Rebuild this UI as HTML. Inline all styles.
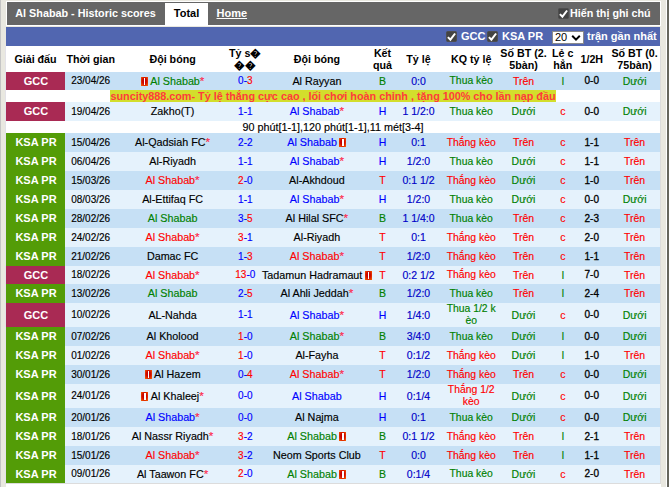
<!DOCTYPE html>
<html><head><meta charset="utf-8"><style>
*{margin:0;padding:0;box-sizing:border-box}
html,body{width:669px;height:487px;overflow:hidden}
body{background:#e9e8e0;position:relative;font-family:"Liberation Sans",sans-serif;font-size:10.5px;color:#000}
.lline{position:absolute;left:0;top:0;width:1px;height:487px;background:#c4c4c4}
.rline{position:absolute;left:666px;top:0;width:1px;height:487px;background:#fff}
.rdark{position:absolute;left:667px;top:0;width:2px;height:487px;background:#66665e}
.top{position:absolute;left:6px;top:1px;width:655px;height:25px;background:#666;border:1px solid #fff}
.title{position:absolute;left:8.3px;top:4px;color:#fff;font-weight:bold;font-size:10.8px;line-height:14px}
.tab{position:absolute;left:158px;top:1px;width:43px;height:23px;background:#fff;color:#000;font-weight:bold;font-size:11px;line-height:20px;text-align:center}
.home{position:absolute;left:209.5px;top:4px;color:#fff;font-weight:bold;font-size:11px;line-height:14px;text-decoration:underline}
.cb1{position:absolute;left:551px;top:6px}
.note1{position:absolute;left:563px;top:4px;color:#fff;font-weight:bold;font-size:10.75px;line-height:14px}
.blue{position:absolute;left:6px;top:27px;width:654px;height:19px;background:#5166b0}
.bl{position:absolute;top:2px;color:#fff;font-weight:bold;font-size:11px;line-height:14px}
.sel{position:absolute;left:546px;top:4px;width:32px;height:13px;background:#fff;border:1px solid #8a8a8a;font-size:11px;line-height:11px;padding-left:2px}
.hdr{position:absolute;left:6px;top:46px;width:654px;height:26px;background:#fff}
.h{position:absolute;top:0;width:100px;height:26px;line-height:26px;text-align:center;font-weight:bold;font-size:10.7px;margin-left:-6px}
.h.two{line-height:12px;padding-top:1px}
.row{position:absolute;left:6px;width:654px}
.row.d{background:#c6e0f5}
.row.l{background:#e5f2fc}
.c{-webkit-text-stroke:0.15px currentColor;position:absolute;top:0.4px;width:160px;text-align:center;white-space:nowrap;margin-left:-6px}
.c.two{line-height:12px;padding-top:0px}
.lg{left:0;top:0;width:59px;margin-left:0;padding-left:1px;-webkit-text-stroke:0;color:#fff;font-weight:bold;font-size:11px}
.gcc{background:#a92a54}
.ksa{background:#539c07}
.ic{display:inline-block;width:7px;height:9px;background:radial-gradient(ellipse at 50% 45%,#c80000 35%,#ff6a00 100%);position:relative;margin:0 2.5px 0 0;vertical-align:-0.5px}
.ic::after{content:"";position:absolute;left:3px;top:1px;width:1.2px;height:7px;background:#fff}
.c span+.ic{margin:0 0 0 2.5px}
.st{color:#ff2448;font-weight:normal;font-size:1.1em;line-height:0}
.ht{font-weight:normal;-webkit-text-stroke:0.3px currentColor}
.tl{color:#0000c8}
.ad{position:absolute;left:6px;width:654px;height:12px;background:#fff;text-align:center;line-height:12px}
.ad span{background:#d3de2c;color:#ff3b3b;font-weight:bold;font-size:10.8px;display:inline-block;height:12px}
.note{position:absolute;left:6px;width:654px;height:12px;background:#fff;text-align:center;line-height:12px;font-size:10.8px;-webkit-text-stroke:0.15px #000}
.bline{position:absolute;left:5px;top:483px;width:655px;height:1px;background:#dcdcdc}
.lvline{position:absolute;left:5px;top:46px;width:1px;height:438px;background:#e3e2e8}
.vline{position:absolute;left:660px;top:46px;width:1px;height:438px;background:#dcdcdc}
.below{position:absolute;left:6px;top:484px;width:655px;height:3px;background:#fff}
</style></head><body>
<div class="lline"></div><div class="rline"></div><div class="rdark"></div>
<div class="top">
 <div class="title">Al Shabab - Historic scores</div>
 <div class="tab">Total</div>
 <div class="home">Home</div>
 <div class="cb1"><svg width="11" height="11" viewBox="0 0 11 11" style="display:block"><rect x="0.5" y="0.5" width="10" height="10" rx="1" fill="#434343" stroke="#4e4e4e" stroke-width="1"/><path d="M1.9 6.1 L4.4 8.7 L9.1 2.5" fill="none" stroke="#fff" stroke-width="2"/></svg></div>
 <div class="note1">Hiển thị ghi chú</div>
</div>
<div class="blue">
 <div class="bl" style="left:440px;top:4px"><svg width="11" height="11" viewBox="0 0 11 11" style="display:block"><rect x="0.5" y="0.5" width="10" height="10" rx="1" fill="#434343" stroke="#4e4e4e" stroke-width="1"/><path d="M1.9 6.1 L4.4 8.7 L9.1 2.5" fill="none" stroke="#fff" stroke-width="2"/></svg></div>
 <div class="bl" style="left:455px">GCC</div>
 <div class="bl" style="left:481px;top:4px"><svg width="11" height="11" viewBox="0 0 11 11" style="display:block"><rect x="0.5" y="0.5" width="10" height="10" rx="1" fill="#434343" stroke="#4e4e4e" stroke-width="1"/><path d="M1.9 6.1 L4.4 8.7 L9.1 2.5" fill="none" stroke="#fff" stroke-width="2"/></svg></div>
 <div class="bl" style="left:496px">KSA PR</div>
 <div class="sel">20<svg style="position:absolute;left:18px;top:2px" width="10" height="8" viewBox="0 0 10 8"><path d="M1.2 1.8 L5 5.6 L8.8 1.8" fill="none" stroke="#000" stroke-width="2"/></svg></div>
 <div class="bl" style="left:581px">trận gần nhất</div>
</div>
<div class="hdr"><div class="h" style="left:-14.5px">Giải đấu</div><div class="h" style="left:40.7px">Thời gian</div><div class="h" style="left:122.6px">Đội bóng</div><div class="h two" style="left:195.3px">Tỷ s�<br>��</div><div class="h" style="left:266.9px">Đội bóng</div><div class="h two" style="left:332.5px">Kết<br>quả</div><div class="h" style="left:368.5px">Tỷ lệ</div><div class="h" style="left:421.2px">KQ tỷ lệ</div><div class="h two" style="left:473.5px">Số BT (2.<br>5bàn)</div><div class="h two" style="left:512.8px">Lẻ c<br>hẳn</div><div class="h" style="left:541.8px">1/2H</div><div class="h two" style="left:584.6px">Số BT (0.<br>75bàn)</div></div>
<div class="row d" style="top:72px;height:18px"><div class="c lg gcc" style="height:18px;line-height:18px">GCC</div><div class="c" style="left:10.700000000000003px;height:18px;line-height:18px;font-size:10px">23/04/26</div><div class="c" style="left:92.6px;height:18px;line-height:18px;font-size:10.75px"><i class="ic"></i><span style="color:#008000">Al Shabab</span><b class="st">*</b></div><div class="c" style="left:165.3px;height:18px;line-height:18px;font-size:10px"><span style="color:#0000ff">0</span><span style="color:#0000ff">-</span><span style="color:#ff0000">3</span></div><div class="c" style="left:236.89999999999998px;height:18px;line-height:18px;font-size:10.75px"><span style="color:#000">Al Rayyan</span></div><div class="c" style="left:302.5px;height:18px;line-height:18px;font-size:10.5px"><span style="color:#008000">B</span></div><div class="c" style="left:338.5px;height:18px;line-height:18px;font-size:10.5px"><span class="tl">0:0</span></div><div class="c" style="left:391.2px;height:18px;line-height:18px;font-size:10.4px"><span style="color:#008000">Thua kèo</span></div><div class="c" style="left:443.5px;height:18px;line-height:18px;font-size:10.5px"><span style="color:#ff0000">Trên</span></div><div class="c" style="left:482.79999999999995px;height:18px;line-height:18px;font-size:10.5px"><span style="color:#008000">l</span></div><div class="c" style="left:511.79999999999995px;height:18px;line-height:18px;font-size:10px"><b class="ht">0-0</b></div><div class="c" style="left:554.6px;height:18px;line-height:18px;font-size:10.5px"><span style="color:#008000">Dưới</span></div></div><div class="ad" style="top:90px"><span>suncity888.com- Tỷ lệ thắng cực cao , lối chơi hoàn chỉnh , tặng 100% cho lần nạp đầu</span></div><div class="row l" style="top:102px;height:19px"><div class="c lg gcc" style="height:19px;line-height:19px">GCC</div><div class="c" style="left:10.700000000000003px;height:19px;line-height:19px;font-size:10px">19/04/26</div><div class="c" style="left:92.6px;height:19px;line-height:19px;font-size:10.75px"><span style="color:#000">Zakho(T)</span></div><div class="c" style="left:165.3px;height:19px;line-height:19px;font-size:10px"><span style="color:#0000ff">1</span><span style="color:#0000ff">-</span><span style="color:#0000ff">1</span></div><div class="c" style="left:236.89999999999998px;height:19px;line-height:19px;font-size:10.75px"><span style="color:#0000ff">Al Shabab</span><b class="st">*</b></div><div class="c" style="left:302.5px;height:19px;line-height:19px;font-size:10.5px"><span style="color:#0000ff">H</span></div><div class="c" style="left:338.5px;height:19px;line-height:19px;font-size:10.5px"><span class="tl">1 1/2:0</span></div><div class="c" style="left:391.2px;height:19px;line-height:19px;font-size:10.4px"><span style="color:#008000">Thua kèo</span></div><div class="c" style="left:443.5px;height:19px;line-height:19px;font-size:10.5px"><span style="color:#008000">Dưới</span></div><div class="c" style="left:482.79999999999995px;height:19px;line-height:19px;font-size:10.5px"><span style="color:#ff0000">c</span></div><div class="c" style="left:511.79999999999995px;height:19px;line-height:19px;font-size:10px"><b class="ht">0-0</b></div><div class="c" style="left:554.6px;height:19px;line-height:19px;font-size:10.5px"><span style="color:#008000">Dưới</span></div></div><div class="note" style="top:121px">90 phút[1-1],120 phút[1-1],11 mét[3-4]</div><div class="row d" style="top:133px;height:19px"><div class="c lg ksa" style="height:19px;line-height:19px">KSA PR</div><div class="c" style="left:10.700000000000003px;height:19px;line-height:19px;font-size:10px">15/04/26</div><div class="c" style="left:92.6px;height:19px;line-height:19px;font-size:10.75px"><span style="color:#000">Al-Qadsiah FC</span><b class="st">*</b></div><div class="c" style="left:165.3px;height:19px;line-height:19px;font-size:10px"><span style="color:#0000ff">2</span><span style="color:#0000ff">-</span><span style="color:#0000ff">2</span></div><div class="c" style="left:236.89999999999998px;height:19px;line-height:19px;font-size:10.75px"><span style="color:#0000ff">Al Shabab</span><i class="ic"></i></div><div class="c" style="left:302.5px;height:19px;line-height:19px;font-size:10.5px"><span style="color:#0000ff">H</span></div><div class="c" style="left:338.5px;height:19px;line-height:19px;font-size:10.5px"><span class="tl">0:1</span></div><div class="c" style="left:391.2px;height:19px;line-height:19px;font-size:10.4px"><span style="color:#ff0000">Thắng kèo</span></div><div class="c" style="left:443.5px;height:19px;line-height:19px;font-size:10.5px"><span style="color:#ff0000">Trên</span></div><div class="c" style="left:482.79999999999995px;height:19px;line-height:19px;font-size:10.5px"><span style="color:#ff0000">c</span></div><div class="c" style="left:511.79999999999995px;height:19px;line-height:19px;font-size:10px"><b class="ht">1-1</b></div><div class="c" style="left:554.6px;height:19px;line-height:19px;font-size:10.5px"><span style="color:#ff0000">Trên</span></div></div><div class="row l" style="top:152px;height:19px"><div class="c lg ksa" style="height:19px;line-height:19px">KSA PR</div><div class="c" style="left:10.700000000000003px;height:19px;line-height:19px;font-size:10px">06/04/26</div><div class="c" style="left:92.6px;height:19px;line-height:19px;font-size:10.75px"><span style="color:#000">Al-Riyadh</span></div><div class="c" style="left:165.3px;height:19px;line-height:19px;font-size:10px"><span style="color:#0000ff">1</span><span style="color:#0000ff">-</span><span style="color:#0000ff">1</span></div><div class="c" style="left:236.89999999999998px;height:19px;line-height:19px;font-size:10.75px"><span style="color:#0000ff">Al Shabab</span><b class="st">*</b></div><div class="c" style="left:302.5px;height:19px;line-height:19px;font-size:10.5px"><span style="color:#0000ff">H</span></div><div class="c" style="left:338.5px;height:19px;line-height:19px;font-size:10.5px"><span class="tl">1/2:0</span></div><div class="c" style="left:391.2px;height:19px;line-height:19px;font-size:10.4px"><span style="color:#008000">Thua kèo</span></div><div class="c" style="left:443.5px;height:19px;line-height:19px;font-size:10.5px"><span style="color:#008000">Dưới</span></div><div class="c" style="left:482.79999999999995px;height:19px;line-height:19px;font-size:10.5px"><span style="color:#ff0000">c</span></div><div class="c" style="left:511.79999999999995px;height:19px;line-height:19px;font-size:10px"><b class="ht">1-1</b></div><div class="c" style="left:554.6px;height:19px;line-height:19px;font-size:10.5px"><span style="color:#ff0000">Trên</span></div></div><div class="row d" style="top:171px;height:19px"><div class="c lg ksa" style="height:19px;line-height:19px">KSA PR</div><div class="c" style="left:10.700000000000003px;height:19px;line-height:19px;font-size:10px">15/03/26</div><div class="c" style="left:92.6px;height:19px;line-height:19px;font-size:10.75px"><span style="color:#ff0000">Al Shabab</span><b class="st">*</b></div><div class="c" style="left:165.3px;height:19px;line-height:19px;font-size:10px"><span style="color:#ff0000">2</span><span style="color:#0000ff">-</span><span style="color:#0000ff">0</span></div><div class="c" style="left:236.89999999999998px;height:19px;line-height:19px;font-size:10.75px"><span style="color:#000">Al-Akhdoud</span></div><div class="c" style="left:302.5px;height:19px;line-height:19px;font-size:10.5px"><span style="color:#ff0000">T</span></div><div class="c" style="left:338.5px;height:19px;line-height:19px;font-size:10.5px"><span class="tl">0:1 1/2</span></div><div class="c" style="left:391.2px;height:19px;line-height:19px;font-size:10.4px"><span style="color:#ff0000">Thắng kèo</span></div><div class="c" style="left:443.5px;height:19px;line-height:19px;font-size:10.5px"><span style="color:#008000">Dưới</span></div><div class="c" style="left:482.79999999999995px;height:19px;line-height:19px;font-size:10.5px"><span style="color:#ff0000">c</span></div><div class="c" style="left:511.79999999999995px;height:19px;line-height:19px;font-size:10px"><b class="ht">1-0</b></div><div class="c" style="left:554.6px;height:19px;line-height:19px;font-size:10.5px"><span style="color:#ff0000">Trên</span></div></div><div class="row l" style="top:190px;height:19px"><div class="c lg ksa" style="height:19px;line-height:19px">KSA PR</div><div class="c" style="left:10.700000000000003px;height:19px;line-height:19px;font-size:10px">08/03/26</div><div class="c" style="left:92.6px;height:19px;line-height:19px;font-size:10.75px"><span style="color:#000">Al-Ettifaq FC</span></div><div class="c" style="left:165.3px;height:19px;line-height:19px;font-size:10px"><span style="color:#0000ff">1</span><span style="color:#0000ff">-</span><span style="color:#0000ff">1</span></div><div class="c" style="left:236.89999999999998px;height:19px;line-height:19px;font-size:10.75px"><span style="color:#0000ff">Al Shabab</span><b class="st">*</b></div><div class="c" style="left:302.5px;height:19px;line-height:19px;font-size:10.5px"><span style="color:#0000ff">H</span></div><div class="c" style="left:338.5px;height:19px;line-height:19px;font-size:10.5px"><span class="tl">1/2:0</span></div><div class="c" style="left:391.2px;height:19px;line-height:19px;font-size:10.4px"><span style="color:#008000">Thua kèo</span></div><div class="c" style="left:443.5px;height:19px;line-height:19px;font-size:10.5px"><span style="color:#008000">Dưới</span></div><div class="c" style="left:482.79999999999995px;height:19px;line-height:19px;font-size:10.5px"><span style="color:#ff0000">c</span></div><div class="c" style="left:511.79999999999995px;height:19px;line-height:19px;font-size:10px"><b class="ht">0-0</b></div><div class="c" style="left:554.6px;height:19px;line-height:19px;font-size:10.5px"><span style="color:#008000">Dưới</span></div></div><div class="row d" style="top:209px;height:19px"><div class="c lg ksa" style="height:19px;line-height:19px">KSA PR</div><div class="c" style="left:10.700000000000003px;height:19px;line-height:19px;font-size:10px">28/02/26</div><div class="c" style="left:92.6px;height:19px;line-height:19px;font-size:10.75px"><span style="color:#008000">Al Shabab</span></div><div class="c" style="left:165.3px;height:19px;line-height:19px;font-size:10px"><span style="color:#0000ff">3</span><span style="color:#0000ff">-</span><span style="color:#ff0000">5</span></div><div class="c" style="left:236.89999999999998px;height:19px;line-height:19px;font-size:10.75px"><span style="color:#000">Al Hilal SFC</span><b class="st">*</b></div><div class="c" style="left:302.5px;height:19px;line-height:19px;font-size:10.5px"><span style="color:#008000">B</span></div><div class="c" style="left:338.5px;height:19px;line-height:19px;font-size:10.5px"><span class="tl">1 1/4:0</span></div><div class="c" style="left:391.2px;height:19px;line-height:19px;font-size:10.4px"><span style="color:#008000">Thua kèo</span></div><div class="c" style="left:443.5px;height:19px;line-height:19px;font-size:10.5px"><span style="color:#ff0000">Trên</span></div><div class="c" style="left:482.79999999999995px;height:19px;line-height:19px;font-size:10.5px"><span style="color:#ff0000">c</span></div><div class="c" style="left:511.79999999999995px;height:19px;line-height:19px;font-size:10px"><b class="ht">2-3</b></div><div class="c" style="left:554.6px;height:19px;line-height:19px;font-size:10.5px"><span style="color:#ff0000">Trên</span></div></div><div class="row l" style="top:228px;height:19px"><div class="c lg ksa" style="height:19px;line-height:19px">KSA PR</div><div class="c" style="left:10.700000000000003px;height:19px;line-height:19px;font-size:10px">24/02/26</div><div class="c" style="left:92.6px;height:19px;line-height:19px;font-size:10.75px"><span style="color:#ff0000">Al Shabab</span><b class="st">*</b></div><div class="c" style="left:165.3px;height:19px;line-height:19px;font-size:10px"><span style="color:#ff0000">3</span><span style="color:#0000ff">-</span><span style="color:#0000ff">1</span></div><div class="c" style="left:236.89999999999998px;height:19px;line-height:19px;font-size:10.75px"><span style="color:#000">Al-Riyadh</span></div><div class="c" style="left:302.5px;height:19px;line-height:19px;font-size:10.5px"><span style="color:#ff0000">T</span></div><div class="c" style="left:338.5px;height:19px;line-height:19px;font-size:10.5px"><span class="tl">0:1</span></div><div class="c" style="left:391.2px;height:19px;line-height:19px;font-size:10.4px"><span style="color:#ff0000">Thắng kèo</span></div><div class="c" style="left:443.5px;height:19px;line-height:19px;font-size:10.5px"><span style="color:#ff0000">Trên</span></div><div class="c" style="left:482.79999999999995px;height:19px;line-height:19px;font-size:10.5px"><span style="color:#ff0000">c</span></div><div class="c" style="left:511.79999999999995px;height:19px;line-height:19px;font-size:10px"><b class="ht">2-0</b></div><div class="c" style="left:554.6px;height:19px;line-height:19px;font-size:10.5px"><span style="color:#ff0000">Trên</span></div></div><div class="row d" style="top:247px;height:19px"><div class="c lg ksa" style="height:19px;line-height:19px">KSA PR</div><div class="c" style="left:10.700000000000003px;height:19px;line-height:19px;font-size:10px">21/02/26</div><div class="c" style="left:92.6px;height:19px;line-height:19px;font-size:10.75px"><span style="color:#000">Damac FC</span></div><div class="c" style="left:165.3px;height:19px;line-height:19px;font-size:10px"><span style="color:#0000ff">1</span><span style="color:#0000ff">-</span><span style="color:#ff0000">3</span></div><div class="c" style="left:236.89999999999998px;height:19px;line-height:19px;font-size:10.75px"><span style="color:#ff0000">Al Shabab</span><b class="st">*</b></div><div class="c" style="left:302.5px;height:19px;line-height:19px;font-size:10.5px"><span style="color:#ff0000">T</span></div><div class="c" style="left:338.5px;height:19px;line-height:19px;font-size:10.5px"><span class="tl">1/2:0</span></div><div class="c" style="left:391.2px;height:19px;line-height:19px;font-size:10.4px"><span style="color:#ff0000">Thắng kèo</span></div><div class="c" style="left:443.5px;height:19px;line-height:19px;font-size:10.5px"><span style="color:#ff0000">Trên</span></div><div class="c" style="left:482.79999999999995px;height:19px;line-height:19px;font-size:10.5px"><span style="color:#ff0000">c</span></div><div class="c" style="left:511.79999999999995px;height:19px;line-height:19px;font-size:10px"><b class="ht">1-1</b></div><div class="c" style="left:554.6px;height:19px;line-height:19px;font-size:10.5px"><span style="color:#ff0000">Trên</span></div></div><div class="row l" style="top:266px;height:18px"><div class="c lg gcc" style="height:18px;line-height:18px">GCC</div><div class="c" style="left:10.700000000000003px;height:18px;line-height:18px;font-size:10px">18/02/26</div><div class="c" style="left:92.6px;height:18px;line-height:18px;font-size:10.75px"><span style="color:#ff0000">Al Shabab</span><b class="st">*</b></div><div class="c" style="left:165.3px;height:18px;line-height:18px;font-size:10px"><span style="color:#ff0000">13</span><span style="color:#0000ff">-</span><span style="color:#0000ff">0</span></div><div class="c" style="left:236.89999999999998px;height:18px;line-height:18px;font-size:10.75px"><span style="color:#000">Tadamun Hadramaut</span><i class="ic"></i></div><div class="c" style="left:302.5px;height:18px;line-height:18px;font-size:10.5px"><span style="color:#ff0000">T</span></div><div class="c" style="left:338.5px;height:18px;line-height:18px;font-size:10.5px"><span class="tl">0:2 1/2</span></div><div class="c" style="left:391.2px;height:18px;line-height:18px;font-size:10.4px"><span style="color:#ff0000">Thắng kèo</span></div><div class="c" style="left:443.5px;height:18px;line-height:18px;font-size:10.5px"><span style="color:#ff0000">Trên</span></div><div class="c" style="left:482.79999999999995px;height:18px;line-height:18px;font-size:10.5px"><span style="color:#008000">l</span></div><div class="c" style="left:511.79999999999995px;height:18px;line-height:18px;font-size:10px"><b class="ht">7-0</b></div><div class="c" style="left:554.6px;height:18px;line-height:18px;font-size:10.5px"><span style="color:#ff0000">Trên</span></div></div><div class="row d" style="top:284px;height:19px"><div class="c lg ksa" style="height:19px;line-height:19px">KSA PR</div><div class="c" style="left:10.700000000000003px;height:19px;line-height:19px;font-size:10px">13/02/26</div><div class="c" style="left:92.6px;height:19px;line-height:19px;font-size:10.75px"><span style="color:#008000">Al Shabab</span></div><div class="c" style="left:165.3px;height:19px;line-height:19px;font-size:10px"><span style="color:#0000ff">2</span><span style="color:#0000ff">-</span><span style="color:#ff0000">5</span></div><div class="c" style="left:236.89999999999998px;height:19px;line-height:19px;font-size:10.75px"><span style="color:#000">Al Ahli Jeddah</span><b class="st">*</b></div><div class="c" style="left:302.5px;height:19px;line-height:19px;font-size:10.5px"><span style="color:#008000">B</span></div><div class="c" style="left:338.5px;height:19px;line-height:19px;font-size:10.5px"><span class="tl">1/2:0</span></div><div class="c" style="left:391.2px;height:19px;line-height:19px;font-size:10.4px"><span style="color:#008000">Thua kèo</span></div><div class="c" style="left:443.5px;height:19px;line-height:19px;font-size:10.5px"><span style="color:#ff0000">Trên</span></div><div class="c" style="left:482.79999999999995px;height:19px;line-height:19px;font-size:10.5px"><span style="color:#008000">l</span></div><div class="c" style="left:511.79999999999995px;height:19px;line-height:19px;font-size:10px"><b class="ht">2-4</b></div><div class="c" style="left:554.6px;height:19px;line-height:19px;font-size:10.5px"><span style="color:#ff0000">Trên</span></div></div><div class="row l" style="top:303px;height:24px"><div class="c lg gcc" style="height:24px;line-height:24px">GCC</div><div class="c" style="left:10.700000000000003px;height:24px;line-height:24px;font-size:10px">10/02/26</div><div class="c" style="left:92.6px;height:24px;line-height:24px;font-size:10.75px"><span style="color:#000">AL-Nahda</span></div><div class="c" style="left:165.3px;height:24px;line-height:24px;font-size:10px"><span style="color:#0000ff">1</span><span style="color:#0000ff">-</span><span style="color:#0000ff">1</span></div><div class="c" style="left:236.89999999999998px;height:24px;line-height:24px;font-size:10.75px"><span style="color:#0000ff">Al Shabab</span><b class="st">*</b></div><div class="c" style="left:302.5px;height:24px;line-height:24px;font-size:10.5px"><span style="color:#0000ff">H</span></div><div class="c" style="left:338.5px;height:24px;line-height:24px;font-size:10.5px"><span class="tl">1/4:0</span></div><div class="c two" style="left:391.2px;height:24px;font-size:10.4px"><span style="color:#008000">Thua 1/2 k<br>èo</span></div><div class="c" style="left:443.5px;height:24px;line-height:24px;font-size:10.5px"><span style="color:#008000">Dưới</span></div><div class="c" style="left:482.79999999999995px;height:24px;line-height:24px;font-size:10.5px"><span style="color:#ff0000">c</span></div><div class="c" style="left:511.79999999999995px;height:24px;line-height:24px;font-size:10px"><b class="ht">0-0</b></div><div class="c" style="left:554.6px;height:24px;line-height:24px;font-size:10.5px"><span style="color:#008000">Dưới</span></div></div><div class="row d" style="top:327px;height:19px"><div class="c lg ksa" style="height:19px;line-height:19px">KSA PR</div><div class="c" style="left:10.700000000000003px;height:19px;line-height:19px;font-size:10px">07/02/26</div><div class="c" style="left:92.6px;height:19px;line-height:19px;font-size:10.75px"><span style="color:#000">Al Kholood</span></div><div class="c" style="left:165.3px;height:19px;line-height:19px;font-size:10px"><span style="color:#ff0000">1</span><span style="color:#0000ff">-</span><span style="color:#0000ff">0</span></div><div class="c" style="left:236.89999999999998px;height:19px;line-height:19px;font-size:10.75px"><span style="color:#008000">Al Shabab</span><b class="st">*</b></div><div class="c" style="left:302.5px;height:19px;line-height:19px;font-size:10.5px"><span style="color:#008000">B</span></div><div class="c" style="left:338.5px;height:19px;line-height:19px;font-size:10.5px"><span class="tl">3/4:0</span></div><div class="c" style="left:391.2px;height:19px;line-height:19px;font-size:10.4px"><span style="color:#008000">Thua kèo</span></div><div class="c" style="left:443.5px;height:19px;line-height:19px;font-size:10.5px"><span style="color:#008000">Dưới</span></div><div class="c" style="left:482.79999999999995px;height:19px;line-height:19px;font-size:10.5px"><span style="color:#008000">l</span></div><div class="c" style="left:511.79999999999995px;height:19px;line-height:19px;font-size:10px"><b class="ht">0-0</b></div><div class="c" style="left:554.6px;height:19px;line-height:19px;font-size:10.5px"><span style="color:#008000">Dưới</span></div></div><div class="row l" style="top:346px;height:19px"><div class="c lg ksa" style="height:19px;line-height:19px">KSA PR</div><div class="c" style="left:10.700000000000003px;height:19px;line-height:19px;font-size:10px">01/02/26</div><div class="c" style="left:92.6px;height:19px;line-height:19px;font-size:10.75px"><span style="color:#ff0000">Al Shabab</span><b class="st">*</b></div><div class="c" style="left:165.3px;height:19px;line-height:19px;font-size:10px"><span style="color:#ff0000">1</span><span style="color:#0000ff">-</span><span style="color:#0000ff">0</span></div><div class="c" style="left:236.89999999999998px;height:19px;line-height:19px;font-size:10.75px"><span style="color:#000">Al-Fayha</span></div><div class="c" style="left:302.5px;height:19px;line-height:19px;font-size:10.5px"><span style="color:#ff0000">T</span></div><div class="c" style="left:338.5px;height:19px;line-height:19px;font-size:10.5px"><span class="tl">0:1/2</span></div><div class="c" style="left:391.2px;height:19px;line-height:19px;font-size:10.4px"><span style="color:#ff0000">Thắng kèo</span></div><div class="c" style="left:443.5px;height:19px;line-height:19px;font-size:10.5px"><span style="color:#008000">Dưới</span></div><div class="c" style="left:482.79999999999995px;height:19px;line-height:19px;font-size:10.5px"><span style="color:#008000">l</span></div><div class="c" style="left:511.79999999999995px;height:19px;line-height:19px;font-size:10px"><b class="ht">1-0</b></div><div class="c" style="left:554.6px;height:19px;line-height:19px;font-size:10.5px"><span style="color:#ff0000">Trên</span></div></div><div class="row d" style="top:365px;height:19px"><div class="c lg ksa" style="height:19px;line-height:19px">KSA PR</div><div class="c" style="left:10.700000000000003px;height:19px;line-height:19px;font-size:10px">30/01/26</div><div class="c" style="left:92.6px;height:19px;line-height:19px;font-size:10.75px"><i class="ic"></i><span style="color:#000">Al Hazem</span></div><div class="c" style="left:165.3px;height:19px;line-height:19px;font-size:10px"><span style="color:#0000ff">0</span><span style="color:#0000ff">-</span><span style="color:#ff0000">4</span></div><div class="c" style="left:236.89999999999998px;height:19px;line-height:19px;font-size:10.75px"><span style="color:#ff0000">Al Shabab</span><b class="st">*</b></div><div class="c" style="left:302.5px;height:19px;line-height:19px;font-size:10.5px"><span style="color:#ff0000">T</span></div><div class="c" style="left:338.5px;height:19px;line-height:19px;font-size:10.5px"><span class="tl">1/2:0</span></div><div class="c" style="left:391.2px;height:19px;line-height:19px;font-size:10.4px"><span style="color:#ff0000">Thắng kèo</span></div><div class="c" style="left:443.5px;height:19px;line-height:19px;font-size:10.5px"><span style="color:#ff0000">Trên</span></div><div class="c" style="left:482.79999999999995px;height:19px;line-height:19px;font-size:10.5px"><span style="color:#ff0000">c</span></div><div class="c" style="left:511.79999999999995px;height:19px;line-height:19px;font-size:10px"><b class="ht">0-0</b></div><div class="c" style="left:554.6px;height:19px;line-height:19px;font-size:10.5px"><span style="color:#008000">Dưới</span></div></div><div class="row l" style="top:384px;height:24px"><div class="c lg ksa" style="height:24px;line-height:24px">KSA PR</div><div class="c" style="left:10.700000000000003px;height:24px;line-height:24px;font-size:10px">24/01/26</div><div class="c" style="left:92.6px;height:24px;line-height:24px;font-size:10.75px"><i class="ic"></i><span style="color:#000">Al Khaleej</span><b class="st">*</b></div><div class="c" style="left:165.3px;height:24px;line-height:24px;font-size:10px"><span style="color:#0000ff">0</span><span style="color:#0000ff">-</span><span style="color:#0000ff">0</span></div><div class="c" style="left:236.89999999999998px;height:24px;line-height:24px;font-size:10.75px"><span style="color:#0000ff">Al Shabab</span></div><div class="c" style="left:302.5px;height:24px;line-height:24px;font-size:10.5px"><span style="color:#0000ff">H</span></div><div class="c" style="left:338.5px;height:24px;line-height:24px;font-size:10.5px"><span class="tl">0:1/4</span></div><div class="c two" style="left:391.2px;height:24px;font-size:10.4px"><span style="color:#ff0000">Thắng 1/2<br>kèo</span></div><div class="c" style="left:443.5px;height:24px;line-height:24px;font-size:10.5px"><span style="color:#008000">Dưới</span></div><div class="c" style="left:482.79999999999995px;height:24px;line-height:24px;font-size:10.5px"><span style="color:#ff0000">c</span></div><div class="c" style="left:511.79999999999995px;height:24px;line-height:24px;font-size:10px"><b class="ht">0-0</b></div><div class="c" style="left:554.6px;height:24px;line-height:24px;font-size:10.5px"><span style="color:#008000">Dưới</span></div></div><div class="row d" style="top:408px;height:19px"><div class="c lg ksa" style="height:19px;line-height:19px">KSA PR</div><div class="c" style="left:10.700000000000003px;height:19px;line-height:19px;font-size:10px">20/01/26</div><div class="c" style="left:92.6px;height:19px;line-height:19px;font-size:10.75px"><span style="color:#0000ff">Al Shabab</span><b class="st">*</b></div><div class="c" style="left:165.3px;height:19px;line-height:19px;font-size:10px"><span style="color:#0000ff">0</span><span style="color:#0000ff">-</span><span style="color:#0000ff">0</span></div><div class="c" style="left:236.89999999999998px;height:19px;line-height:19px;font-size:10.75px"><span style="color:#000">Al Najma</span></div><div class="c" style="left:302.5px;height:19px;line-height:19px;font-size:10.5px"><span style="color:#0000ff">H</span></div><div class="c" style="left:338.5px;height:19px;line-height:19px;font-size:10.5px"><span class="tl">0:1</span></div><div class="c" style="left:391.2px;height:19px;line-height:19px;font-size:10.4px"><span style="color:#008000">Thua kèo</span></div><div class="c" style="left:443.5px;height:19px;line-height:19px;font-size:10.5px"><span style="color:#008000">Dưới</span></div><div class="c" style="left:482.79999999999995px;height:19px;line-height:19px;font-size:10.5px"><span style="color:#ff0000">c</span></div><div class="c" style="left:511.79999999999995px;height:19px;line-height:19px;font-size:10px"><b class="ht">0-0</b></div><div class="c" style="left:554.6px;height:19px;line-height:19px;font-size:10.5px"><span style="color:#008000">Dưới</span></div></div><div class="row l" style="top:427px;height:19px"><div class="c lg ksa" style="height:19px;line-height:19px">KSA PR</div><div class="c" style="left:10.700000000000003px;height:19px;line-height:19px;font-size:10px">18/01/26</div><div class="c" style="left:92.6px;height:19px;line-height:19px;font-size:10.75px"><span style="color:#000">Al Nassr Riyadh</span><b class="st">*</b></div><div class="c" style="left:165.3px;height:19px;line-height:19px;font-size:10px"><span style="color:#ff0000">3</span><span style="color:#0000ff">-</span><span style="color:#0000ff">2</span></div><div class="c" style="left:236.89999999999998px;height:19px;line-height:19px;font-size:10.75px"><span style="color:#008000">Al Shabab</span><i class="ic"></i></div><div class="c" style="left:302.5px;height:19px;line-height:19px;font-size:10.5px"><span style="color:#008000">B</span></div><div class="c" style="left:338.5px;height:19px;line-height:19px;font-size:10.5px"><span class="tl">0:1 1/2</span></div><div class="c" style="left:391.2px;height:19px;line-height:19px;font-size:10.4px"><span style="color:#ff0000">Thắng kèo</span></div><div class="c" style="left:443.5px;height:19px;line-height:19px;font-size:10.5px"><span style="color:#ff0000">Trên</span></div><div class="c" style="left:482.79999999999995px;height:19px;line-height:19px;font-size:10.5px"><span style="color:#008000">l</span></div><div class="c" style="left:511.79999999999995px;height:19px;line-height:19px;font-size:10px"><b class="ht">2-1</b></div><div class="c" style="left:554.6px;height:19px;line-height:19px;font-size:10.5px"><span style="color:#ff0000">Trên</span></div></div><div class="row d" style="top:446px;height:19px"><div class="c lg ksa" style="height:19px;line-height:19px">KSA PR</div><div class="c" style="left:10.700000000000003px;height:19px;line-height:19px;font-size:10px">15/01/26</div><div class="c" style="left:92.6px;height:19px;line-height:19px;font-size:10.75px"><span style="color:#ff0000">Al Shabab</span><b class="st">*</b></div><div class="c" style="left:165.3px;height:19px;line-height:19px;font-size:10px"><span style="color:#ff0000">3</span><span style="color:#0000ff">-</span><span style="color:#0000ff">2</span></div><div class="c" style="left:236.89999999999998px;height:19px;line-height:19px;font-size:10.75px"><span style="color:#000">Neom Sports Club</span></div><div class="c" style="left:302.5px;height:19px;line-height:19px;font-size:10.5px"><span style="color:#ff0000">T</span></div><div class="c" style="left:338.5px;height:19px;line-height:19px;font-size:10.5px"><span class="tl">0:0</span></div><div class="c" style="left:391.2px;height:19px;line-height:19px;font-size:10.4px"><span style="color:#ff0000">Thắng kèo</span></div><div class="c" style="left:443.5px;height:19px;line-height:19px;font-size:10.5px"><span style="color:#ff0000">Trên</span></div><div class="c" style="left:482.79999999999995px;height:19px;line-height:19px;font-size:10.5px"><span style="color:#008000">l</span></div><div class="c" style="left:511.79999999999995px;height:19px;line-height:19px;font-size:10px"><b class="ht">1-1</b></div><div class="c" style="left:554.6px;height:19px;line-height:19px;font-size:10.5px"><span style="color:#ff0000">Trên</span></div></div><div class="row l" style="top:465px;height:18px"><div class="c lg ksa" style="height:18px;line-height:18px">KSA PR</div><div class="c" style="left:10.700000000000003px;height:18px;line-height:18px;font-size:10px">09/01/26</div><div class="c" style="left:92.6px;height:18px;line-height:18px;font-size:10.75px"><span style="color:#000">Al Taawon FC</span><b class="st">*</b></div><div class="c" style="left:165.3px;height:18px;line-height:18px;font-size:10px"><span style="color:#ff0000">2</span><span style="color:#0000ff">-</span><span style="color:#0000ff">0</span></div><div class="c" style="left:236.89999999999998px;height:18px;line-height:18px;font-size:10.75px"><span style="color:#008000">Al Shabab</span><i class="ic"></i></div><div class="c" style="left:302.5px;height:18px;line-height:18px;font-size:10.5px"><span style="color:#008000">B</span></div><div class="c" style="left:338.5px;height:18px;line-height:18px;font-size:10.5px"><span class="tl">0:1/4</span></div><div class="c" style="left:391.2px;height:18px;line-height:18px;font-size:10.4px"><span style="color:#008000">Thua kèo</span></div><div class="c" style="left:443.5px;height:18px;line-height:18px;font-size:10.5px"><span style="color:#008000">Dưới</span></div><div class="c" style="left:482.79999999999995px;height:18px;line-height:18px;font-size:10.5px"><span style="color:#ff0000">c</span></div><div class="c" style="left:511.79999999999995px;height:18px;line-height:18px;font-size:10px"><b class="ht">2-0</b></div><div class="c" style="left:554.6px;height:18px;line-height:18px;font-size:10.5px"><span style="color:#ff0000">Trên</span></div></div>
<div class="vline"></div><div class="lvline"></div><div class="bline"></div><div class="below"></div>
</body></html>
